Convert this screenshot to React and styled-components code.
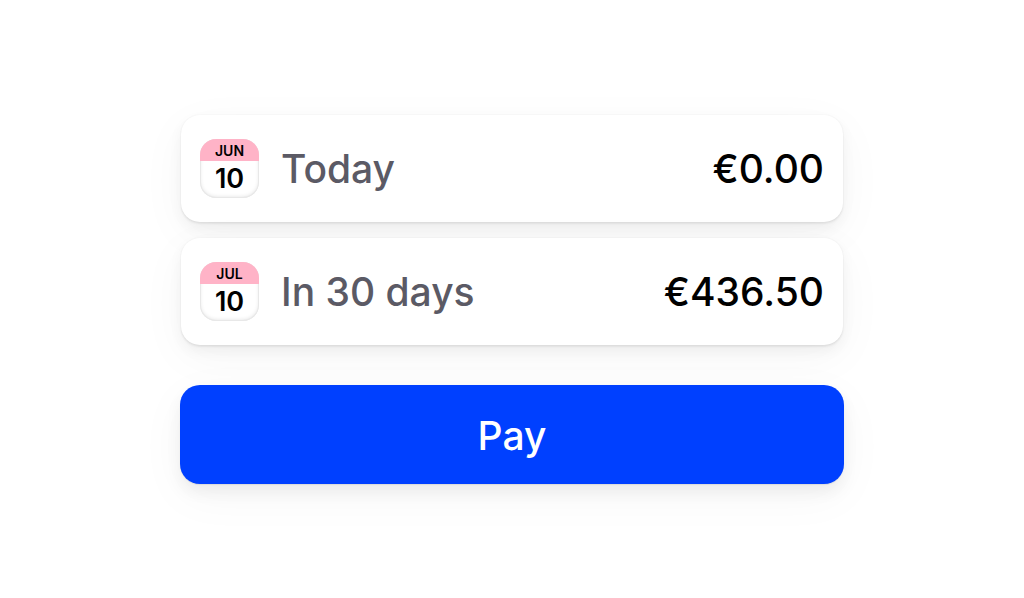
import React from "react";
import styled, { createGlobalStyle } from "styled-components";

const GlobalStyle = createGlobalStyle`
  * { box-sizing: border-box; }
  body {
    margin: 0;
    background: #fff;
    font-family: Inter, "Liberation Sans", sans-serif;
    -webkit-font-smoothing: antialiased;
  }
`;

const Page = styled.main`
  min-height: 100vh;
  display: flex;
  align-items: center;
  justify-content: center;
  padding: 25px 24px 24px;
`;

const Checkout = styled.form`
  width: 100%;
  max-width: 664px;
  display: flex;
  flex-direction: column;
  gap: 40px;
`;

const Schedule = styled.ul`
  list-style: none;
  margin: 0;
  padding: 0 1px;
  display: flex;
  flex-direction: column;
  gap: 16px;
`;

const Installment = styled.li`
  display: flex;
  align-items: center;
  gap: 22px;
  min-height: 107px;
  padding: 0 19px;
  border-radius: 19px;
  background: #fff;
  box-shadow:
    0 0 2px rgba(0, 0, 0, 0.06),
    0 2px 2px rgba(0, 0, 0, 0.06),
    0 6px 14px rgba(0, 0, 0, 0.05),
    0 12px 48px rgba(0, 0, 0, 0.04);
`;

const CalendarTile = styled.time`
  flex: none;
  width: 59px;
  height: 59px;
  display: flex;
  flex-direction: column;
  overflow: hidden;
  border-radius: 16px;
  text-align: center;
  color: #000;
  background: #fff;
  box-shadow: inset 0 0 0 1px #e8e8e8, inset 0 -1px 4px rgba(0, 0, 0, 0.12);
`;

const Month = styled.span`
  height: 22px;
  background: #ffb3c7;
  font-size: 14px;
  line-height: 24px;
  font-weight: 600;
`;

const Day = styled.span`
  font-size: 27px;
  line-height: 36px;
  font-weight: 600;
`;

const When = styled.span`
  flex: 1;
  font-size: 39px;
  line-height: 48px;
  font-weight: 500;
  color: #5b5a65;
`;

const Amount = styled.span`
  font-size: 39px;
  line-height: 48px;
  font-weight: 500;
  color: #000;
`;

const PayButton = styled.button`
  width: 100%;
  height: 99px;
  padding: 3px 0 0;
  border: 0;
  border-radius: 20px;
  background: #0040ff;
  color: #fff;
  font: 500 39px/48px Inter, "Liberation Sans", sans-serif;
  cursor: pointer;
  box-shadow:
    0 1px 1px rgba(0, 0, 0, 0.08),
    0 8px 16px rgba(0, 0, 0, 0.06),
    0 12px 48px rgba(0, 0, 0, 0.04);
`;

const payments = [
  { date: "06-10", month: "JUN", day: "10", when: "Today", amount: "€0.00" },
  { date: "07-10", month: "JUL", day: "10", when: "In 30 days", amount: "€436.50" },
];

export default function App() {
  return (
    <>
      <GlobalStyle />
      <Page>
        <Checkout onSubmit={(event) => event.preventDefault()}>
          <Schedule>
            {payments.map((payment) => (
              <Installment key={payment.date}>
                <CalendarTile dateTime={payment.date}>
                  <Month>{payment.month}</Month>
                  <Day>{payment.day}</Day>
                </CalendarTile>
                <When>{payment.when}</When>
                <Amount>{payment.amount}</Amount>
              </Installment>
            ))}
          </Schedule>
          <PayButton type="submit">Pay</PayButton>
        </Checkout>
      </Page>
    </>
  );
}
